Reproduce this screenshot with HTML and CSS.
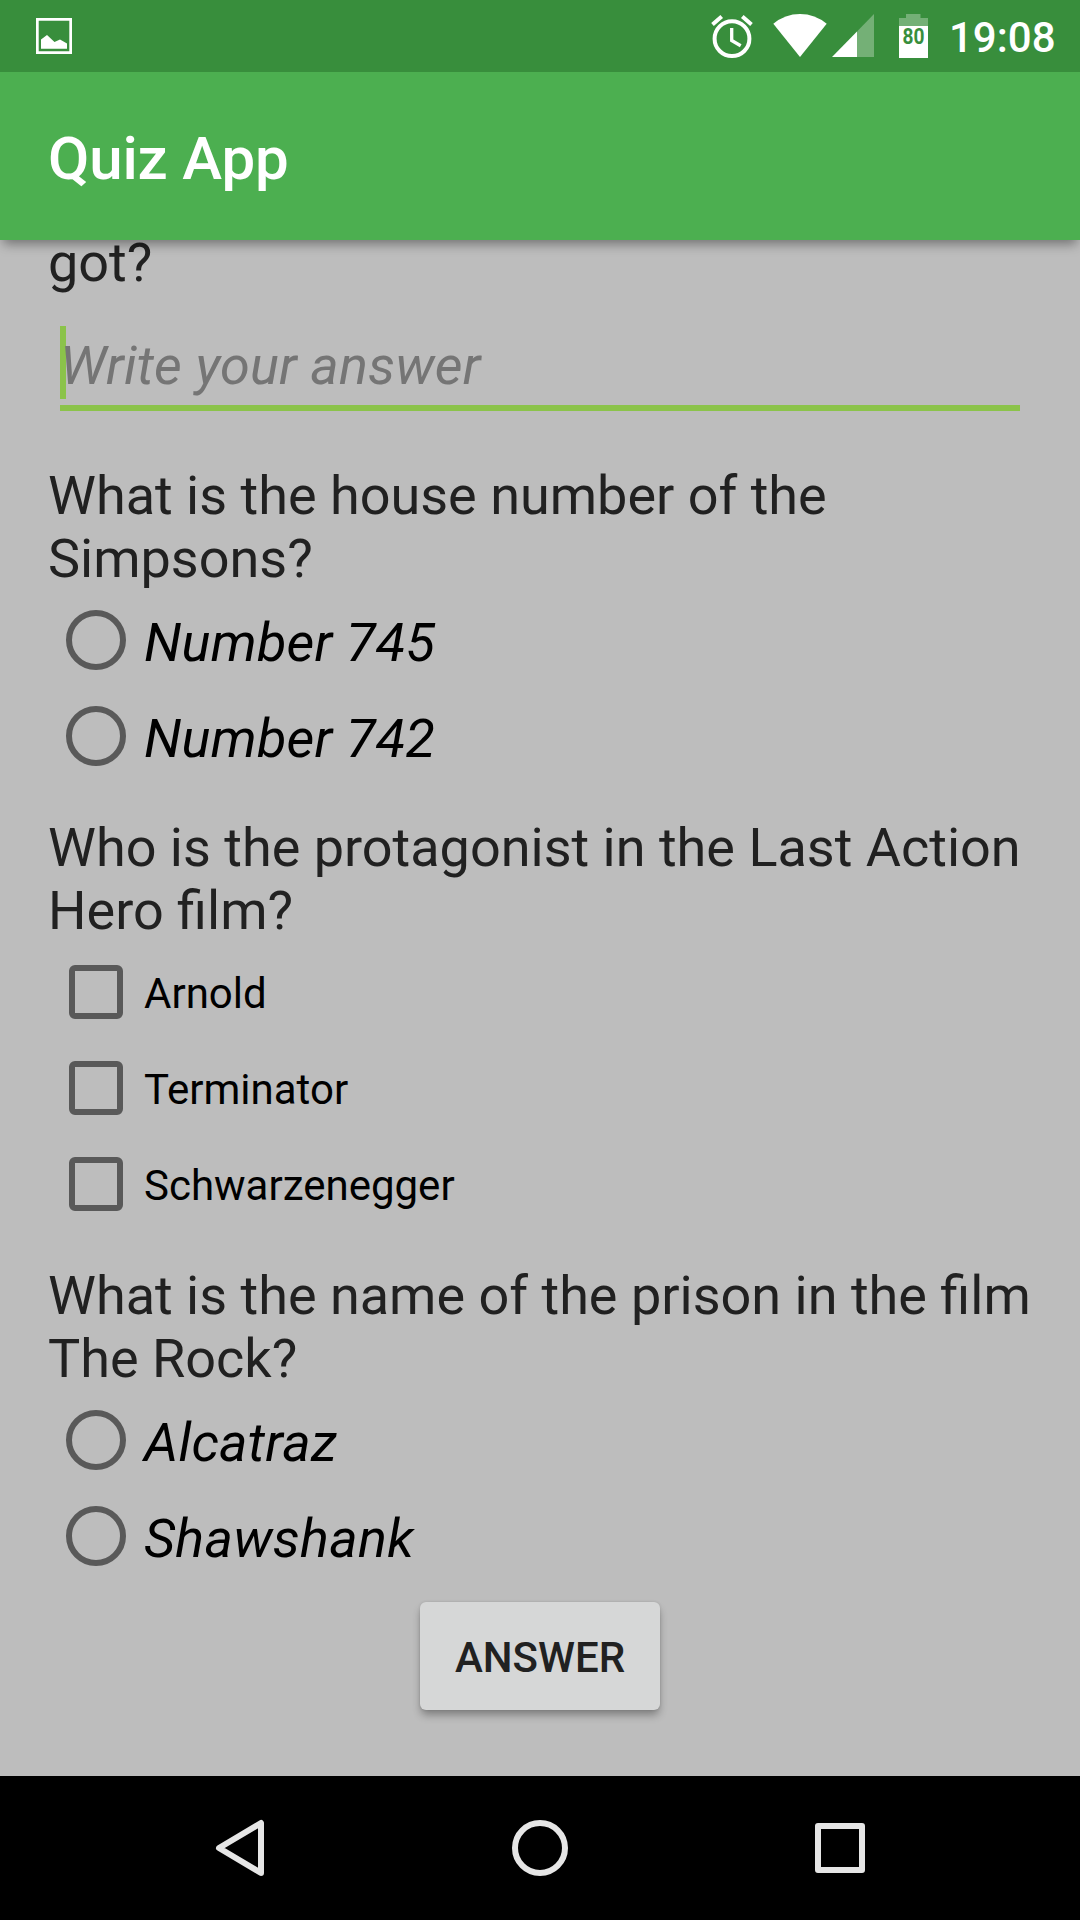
FILE: index.html
```html
<!DOCTYPE html>
<html lang="en">
<head>
<meta charset="utf-8">
<title>Quiz App</title>
<link rel="stylesheet" href="styles.css">
</head>
<body>
<header class="status">
  <svg class="status-picture" width="36" height="36" viewBox="0 0 36 36"><path fill="#fff" fill-rule="evenodd" d="M0 0h36v36H0zM2.700 2.700v30.600h30.600V2.700z"/><path fill="#fff" d="M5 30.700V21.500L11 17l7.500 7 5.500-2.500 7 4v5.200z"/></svg>
  <div class="status-icons">
    <svg class="alarm" width="42" height="45" viewBox="0 0 42 45"><g fill="none" stroke="#fff" stroke-width="4"><circle cx="21" cy="24.700" r="17.400"/><path d="M1.500 10.500 10.700 2.500M40.500 10.500 31.300 2.500"/><path stroke-width="3.300" d="M20.700 14v12.500l9 5.200"/></g></svg>
    <svg class="wifi" width="54" height="43" viewBox="0 0 54 43"><path fill="#fff" d="M27 43 .3 9.800Q12 0 27 0t26.700 9.800z"/></svg>
    <svg class="signal" width="42" height="43" viewBox="0 0 42 43"><path fill="#fff" opacity=".3" d="M42 0v43H25V17.400z"/><path fill="#fff" d="M25 17.400V43H0z"/></svg>
    <div class="battery"><svg width="29" height="44" viewBox="0 0 29 44"><path fill="#fff" opacity=".3" d="M7 0h14.500v4H29v8H0V4h7z"/><path fill="#fff" d="M0 12h29v32H0z"/></svg><span class="battery-level">80</span></div>
    <time class="clock">19:08</time>
  </div>
</header>
<div class="toolbar"><h1 class="title">Quiz App</h1></div>
<main class="quiz">
  <p class="question first">got?</p>
  <div class="field"><span class="cursor"></span><span class="hint">Write your answer</span></div>
  <section class="group simpsons">
    <p class="question">What is the house number of the<br>Simpsons?</p>
    <div class="option"><span class="radio"></span><span class="label">Number 745</span></div>
    <div class="option"><span class="radio"></span><span class="label">Number 742</span></div>
  </section>
  <section class="group hero">
    <p class="question">Who is the protagonist in the Last Action<br>Hero film?</p>
    <div class="option"><span class="check"></span><span class="label small">Arnold</span></div>
    <div class="option"><span class="check"></span><span class="label small">Terminator</span></div>
    <div class="option"><span class="check"></span><span class="label small">Schwarzenegger</span></div>
  </section>
  <section class="group rock">
    <p class="question">What is the name of the prison in the film<br>The Rock?</p>
    <div class="option"><span class="radio"></span><span class="label">Alcatraz</span></div>
    <div class="option"><span class="radio"></span><span class="label">Shawshank</span></div>
  </section>
  <button class="answer">ANSWER</button>
</main>
<nav class="navbar">
  <svg width="60" height="60" viewBox="0 0 60 60"><path fill="none" stroke="#e6e6e6" stroke-width="6" stroke-linejoin="round" d="M51 5v50L9 30z"/></svg>
  <svg width="60" height="60" viewBox="0 0 60 60"><circle cx="30" cy="30" r="25" fill="none" stroke="#e6e6e6" stroke-width="6"/></svg>
  <svg width="60" height="60" viewBox="0 0 60 60"><rect x="8" y="8" width="44" height="44" fill="none" stroke="#e6e6e6" stroke-width="6" stroke-linejoin="round"/></svg>
</nav>
</body>
</html>
```
FILE: styles.css
```css
* { box-sizing: border-box; }
body { margin: 0; width: 1080px; height: 1920px; overflow: hidden; display: flex; flex-direction: column; background: #bdbdbd; font-family: Roboto, sans-serif; color: #212121; }
.status { position: relative; z-index: 2; height: 72px; flex: none; background: #388e3c; display: flex; justify-content: space-between; padding: 0 25px 0 36px; color: #fff; }
.status-picture { margin-top: 18px; }
.status-icons { display: flex; align-items: flex-start; }
.alarm { margin: 14px 20px 0 0; }
.wifi { margin: 14px 5px 0 0; }
.signal { margin: 14px 25px 0 0; }
.battery { position: relative; width: 29px; height: 44px; margin: 14px 21px 0 0; }
.battery-level { position: absolute; left: 0; top: 12px; width: 29px; text-align: center; font-size: 22px; line-height: 22px; font-weight: 700; color: #388e3c; transform: scaleX(.87); }
.clock { width: 106px; font-size: 42px; line-height: 50px; font-weight: 500; margin-top: 13px; }
.toolbar { position: relative; height: 168px; flex: none; background: #4caf50; padding: 0 48px; display: flex; align-items: center; box-shadow: 0 7px 11px -3px rgba(0,0,0,.4); }
.title { margin: 5px 0 0; font-size: 60px; line-height: 70px; font-weight: 500; letter-spacing: -.15px; color: #fff; }
.quiz { flex: 1; display: flex; flex-direction: column; padding: 0 48px; }
.question { margin: 0 0 2px; font-size: 54px; line-height: 63px; white-space: nowrap; }
.first { margin: -9px 0 0; }
.field { position: relative; height: 86px; margin: 31px 12px 0; border-bottom: 6px solid #8bc34a; }
.cursor { position: absolute; left: 0; top: 1px; width: 6px; height: 73px; background: #8bc34a; }
.hint { position: relative; display: block; font-size: 54px; line-height: 63px; padding-top: 9px; font-style: italic; letter-spacing: .15px; color: #757575; }
.group { display: flex; flex-direction: column; }
.simpsons { margin-top: 53px; }
.hero, .rock { margin-top: 32px; }
.option { height: 96px; display: flex; align-items: center; padding-left: 18px; }
.radio { width: 60px; height: 60px; border: 6px solid #595959; border-radius: 50%; margin-right: 18px; }
.check { width: 54px; height: 54px; border: 6px solid #595959; border-radius: 6px; margin: 0 21px 0 3px; }
.label { font-size: 54px; line-height: 63px; font-style: italic; letter-spacing: .25px; color: #000; margin-top: 4px; }
.small { font-size: 42px; line-height: 50px; font-style: normal; letter-spacing: 0; }
.answer { width: 240px; height: 108px; margin: 18px auto 0; padding: 4px 0 0; border: 0; border-radius: 6px; background: #d6d7d7; box-shadow: 0 6px 8px -1px rgba(0,0,0,.33), 0 0 3px rgba(0,0,0,.12); font: 500 42px/50px Roboto, sans-serif; color: #212121; }
.navbar { height: 144px; flex: none; background: #000; display: flex; justify-content: space-between; align-items: center; padding: 0 210px; }
```
